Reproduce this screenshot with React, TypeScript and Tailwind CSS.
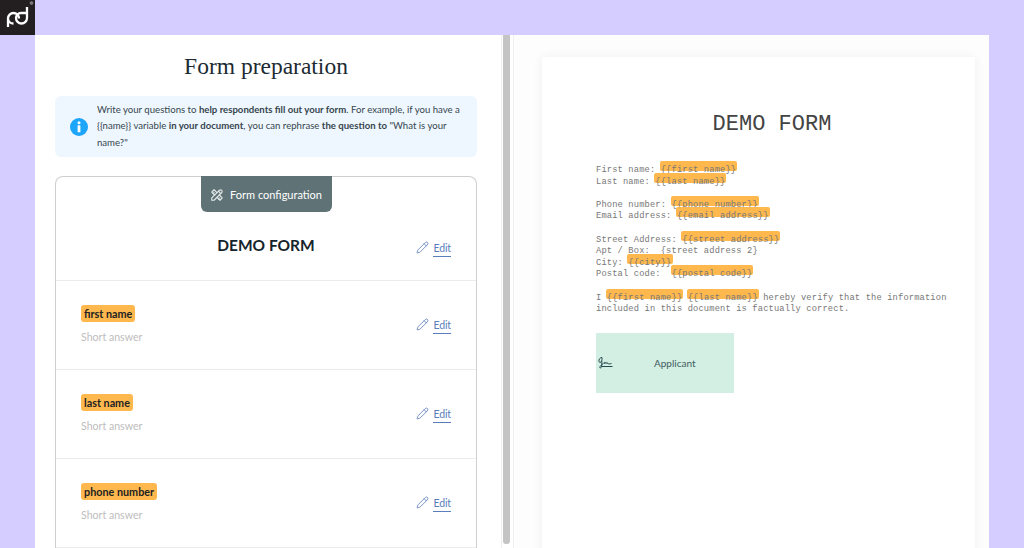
import React from "react";
import { TbTools } from "react-icons/tb";
import { Pencil } from "lucide-react";

const V = ({ children }: { children: React.ReactNode }) => (
  <span className="relative inline-block">
    <span className="absolute left-[-1px] right-[-1px] top-[-4px] h-[10px] rounded-[2px] bg-[#ffb84d]" />
    <span className="relative">{children}</span>
  </span>
);

const Edit = ({ className = "" }: { className?: string }) => (
  <div className={"flex items-start gap-[4px] text-[#5a7dbb] " + className}>
    <Pencil size={13} strokeWidth={1.5} className="mt-[-1px]" />
    <span className="border-b border-[#5a7dbb] pb-[1px] font-['Lato',sans-serif] text-[10.500px] leading-[13px] tracking-[-0.1px]">Edit</span>
  </div>
);

const Row = ({ label }: { label: string }) => (
  <div className="flex h-[89px] items-center justify-between border-t border-[#ececec] pl-[25px] pr-[25px]">
    <div className="mb-[1px] flex flex-col items-start">
      <span className="rounded-[3px] bg-[#ffb84d] px-[3px] text-[10.800px] font-bold leading-[17px] text-[#222]">{label}</span>
      <span className="mt-[7px] text-[10.600px] leading-[16px] text-[#bdbdbd]">Short answer</span>
    </div>
    <Edit className="mt-[2px]" />
  </div>
);

export default function App() {
  return (
    <div className="relative flex h-[548px] w-[1024px] overflow-hidden bg-[#d5ccff] pl-[35px] pr-[35px] pt-[35px] font-['Lato',sans-serif]">
      <div className="absolute left-0 top-0 h-[35px] w-[35px] bg-[#231f20]">
        <svg viewBox="0 0 35 35" className="h-[35px] w-[35px]" fill="none" stroke="#fff" strokeWidth="2.300">
          <path d="M8 27V18.500a5.500 5.500 0 0 1 11 0M8 18.500a5.500 5.500 0 0 0 5.500 5" />
          <path d="M27 7V18a5.500 5.500 0 0 1-11 0 5 5 0 0 1 5-5h6" />
          <circle cx="31.500" cy="3" r="1.500" fill="#777" stroke="#999" strokeWidth="0.500" />
        </svg>
      </div>

      <div className="flex w-full bg-white">
        {/* form pane */}
        <div className="w-[466px] shrink-0 pl-[20px] pr-[24px]">
          <h1 className="mt-[16px] text-center font-['Liberation_Serif',serif] text-[23.500px] leading-[30px] text-[#1c2b33]">
            Form preparation
          </h1>
          <div className="mt-[15px] flex h-[61px] items-center gap-[9px] rounded-[6px] bg-[#eef7ff] pl-[15px]">
            <svg viewBox="0 0 18 18" className="h-[18px] w-[18px] shrink-0">
              <circle cx="9" cy="9" r="9" fill="#1da5fb" />
              <circle cx="9" cy="4.700" r="1.500" fill="#fff" />
              <rect x="7.600" y="7.300" width="2.800" height="7" rx="0.500" fill="#fff" />
            </svg>
            <p className="whitespace-nowrap text-[9.600px] leading-[16.500px] text-[#36454d]">
              Write your questions to <b>help respondents fill out your form</b>. For example, if you have a
              <br />
              {"{{name}} "}variable <b>in your document</b>, you can rephrase <b>the question to</b> "What is your
              <br />
              name?"
            </p>
          </div>

          <div className="mt-[19px] rounded-t-[8px] border-[1.5px] border-b-0 border-[#cfcfcf]">
            <div className="flex justify-center">
              <div className="-mt-[1.5px] flex h-[36.500px] w-[131px] items-center justify-center gap-[6px] rounded-b-[6px] bg-[#5f7377] pt-[2px] text-white">
                <TbTools size={14} className="text-[#e4e9ea]" />
                <span className="text-[11px]">Form configuration</span>
              </div>
            </div>
            <div className="relative flex h-[68px] items-center justify-end pr-[25px] pt-[6px]">
              <span className="absolute left-0 right-0 top-[23px] text-center text-[15.500px] font-bold leading-[20px] text-[#15242c]">
                DEMO FORM
              </span>
              <Edit />
            </div>
            <Row label="first name" />
            <Row label="last name" />
            <Row label="phone number" />
            <div className="border-t border-[#ececec]" />
          </div>
        </div>

        {/* scrollbar */}
        <div className="h-full w-[13px] shrink-0 border-x border-[#efefef] pl-[1px]">
          <div className="h-[509px] w-[7px] rounded-b-[3px] bg-[#c4c4c4]" />
        </div>

        {/* document pane */}
        <div className="min-w-0 flex-1 bg-[#fdfdfd] pl-[28px] pt-[22px]">
          <div className="h-[520px] w-[433px] bg-white pl-[54px] pt-[56px] font-['Liberation_Mono',monospace] shadow-[0_0_10px_rgba(0,0,0,0.06)]">
            <div className="w-[352px] text-center text-[22px] leading-[24px] text-[#444]">DEMO FORM</div>
            <div className="mt-[28px] whitespace-pre text-[8.730px] leading-[11.600px] tracking-[0.16px] text-[#777]">
              <div>First name: <V>{"{{first name}}"}</V></div>
              <div>Last name: <V>{"{{last name}}"}</V></div>
              <div>&nbsp;</div>
              <div>Phone number: <V>{"{{phone number}}"}</V></div>
              <div>Email address: <V>{"{{email address}}"}</V></div>
              <div>&nbsp;</div>
              <div>Street Address: <V>{"{{street address}}"}</V></div>
              <div>Apt / Box:  {"{street address 2}"}</div>
              <div>City: <V>{"{{city}}"}</V></div>
              <div>Postal code:  <V>{"{{postal code}}"}</V></div>
              <div>&nbsp;</div>
              <div>I <V>{"{{first name}}"}</V> <V>{"{{last name}}"}</V> hereby verify that the information</div>
              <div>included in this document is factually correct.</div>
            </div>
            <div className="mt-[17px] flex h-[60px] w-[138px] items-center bg-[#d3eee2] pl-[1px] font-['Lato',sans-serif]">
              <svg viewBox="0 0 16 16" className="h-[16px] w-[16px] shrink-0" fill="none" stroke="#24494f" strokeWidth="1">
                <path d="M5 2.500c-2 0-3.500 2-3 4 .4 1.500 2 1.200 2.700-.5.4-1 .4-2.500.3-3.500M4.700 6c.3 2.500.2 5-.5 6.500-.6 1-1.700.5-1.200-.8.5-1 1.500-2 3-3M6.500 8.500c.8-1.500 1-1.500 1 0 .5-1 1.500-1.500 1.500 0 .5-1 1.500-1.500 1.500 0 .8.5 2.300.5 4 0" />
                <path d="M5 11.500h10.500" />
              </svg>
              <span className="ml-[41px] pt-[1px] text-[10px] text-[#3f5c60]">Applicant</span>
            </div>
          </div>
        </div>
      </div>
    </div>
  );
}
